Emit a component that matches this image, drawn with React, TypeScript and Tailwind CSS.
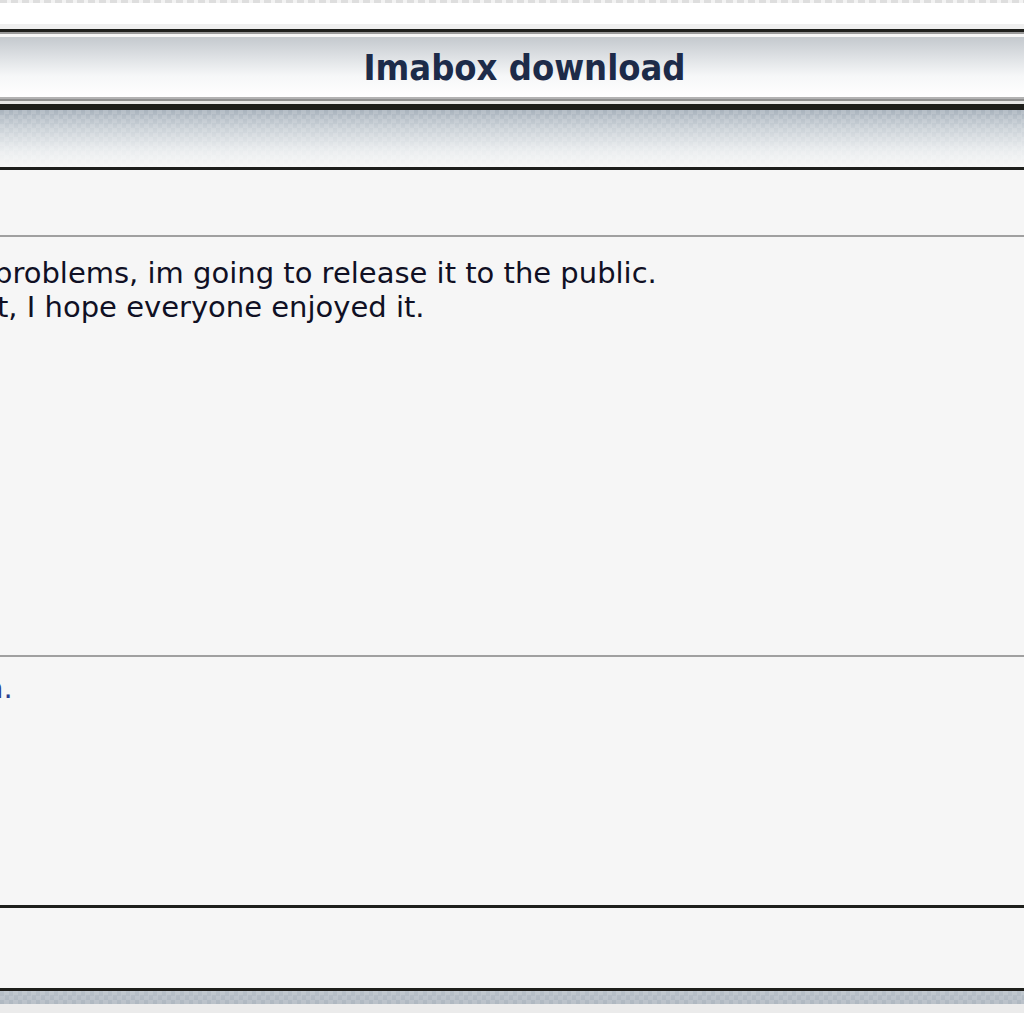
const darkRule = 'bg-[#1e1f1c]';

function CheckerBar({ className }: { className: string }) {
  return (
    <div
      className={`${className} bg-[repeating-conic-gradient(#ffffff22_0_25%,#00000000_0_50%),linear-gradient(#a9b3bd,#c9d0d6_30%,#e9ecee_70%,#f7f7f7)] bg-[length:9px_9px,100%_100%]`}
    />
  );
}

export default function App() {
  return (
    <div className="w-[1024px] h-[1024px] overflow-hidden bg-white flex flex-col font-['DejaVu_Sans',Verdana,sans-serif]">
      <div className="h-[3px] bg-[repeating-linear-gradient(90deg,#dedede_0_7px,#f3f3f3_7px_11px)]" />
      <div className="h-[21px] bg-white" />
      <div className="h-[5px] bg-[#efefef]" />

      {/* forum table header */}
      <div className={`h-[3px] ${darkRule}`} />
      <div className="h-[2px] bg-[#9a9a9a]" />
      <div className="h-[3px] bg-[#f6f6f6]" />
      <div className="h-[60px] bg-[linear-gradient(#c4c9ce,#dfe2e5_35%,#f6f7f8_65%,#ffffff)] flex items-center pl-[25px] justify-center">
        <h1 className="font-['DejaVu_Sans_Condensed','DejaVu_Sans',sans-serif] font-bold text-[36px] leading-none text-[#1d2b49] translate-y-[1px]">
          Imabox download
        </h1>
      </div>
      <div className="h-[2px] bg-[#b3b3b3]" />
      <div className="h-[2px] bg-[#8f8f8f]" />
      <div className="h-[3px] bg-[#e6e6e6]" />
      <div className={`h-[6px] ${darkRule}`} />
      <CheckerBar className="h-[57px]" />
      <div className={`h-[3px] ${darkRule}`} />

      {/* post */}
      <div className="h-[65px] bg-[#f6f6f6]" />
      <div className="h-[2px] bg-[#a0a0a0]" />
      <div className="h-[418px] bg-[#f6f6f6] pt-[19px] text-[29px] leading-[34px] text-[#101024] whitespace-nowrap">
        <p className="-ml-[6px]">problems, im going to release it to the public.</p>
        <p className="-ml-[3px]">t, I hope everyone enjoyed it.</p>
      </div>
      <div className="h-[2px] bg-[#a0a0a0]" />
      <div className="h-[248px] bg-[#f6f6f6] pt-[14px] text-[29px] leading-[34px] whitespace-nowrap">
        <p className="-ml-[15px] text-[#2a3f8f]">n.</p>
      </div>
      <div className={`h-[3px] ${darkRule}`} />
      <div className="h-[80px] bg-[#f6f6f6]" />
      <div className={`h-[3px] ${darkRule}`} />
      <div className="h-[13px] bg-[repeating-conic-gradient(#ffffff22_0_25%,#00000000_0_50%),linear-gradient(#b8c1c9,#aeb7c0)] bg-[length:9px_9px,100%_100%]" />
      <div className="h-[9px] bg-[#ebebeb]" />
      <div className="flex-1 bg-white" />
    </div>
  );
}
